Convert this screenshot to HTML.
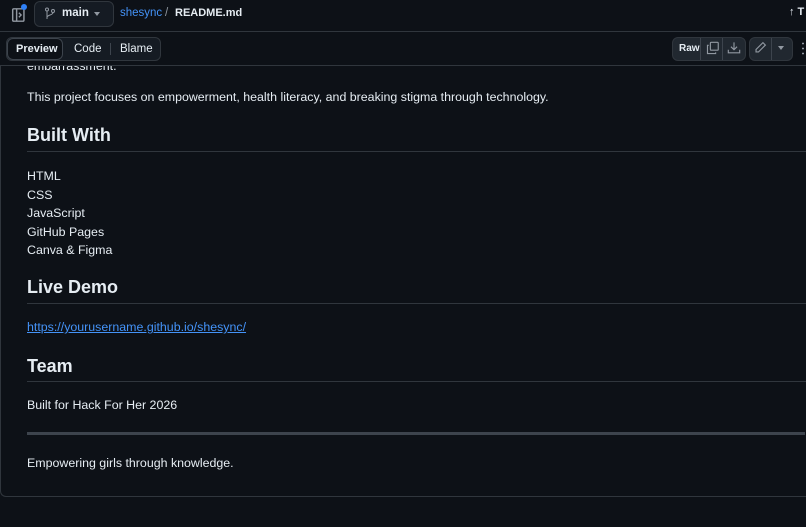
<!DOCTYPE html><html><head><style>
body{margin:0;width:806px;height:527px;background:#0d1117;font-family:"Liberation Sans",sans-serif;color:#e6edf3;overflow:hidden;position:relative}
.a{position:absolute}
.t{font-size:12.4px;white-space:nowrap}
h2{position:absolute;margin:0;font-size:18px;font-weight:bold;left:27px}
.hl{position:absolute;left:27px;right:0;height:1px;background:#30363d}
.btn{position:absolute;border:1px solid #30363d;border-radius:6px;background:#212830}
</style></head><body>
<div class="a" style="left:0;top:0;width:806px;height:31px;border-bottom:1px solid #30363d"></div>
<svg class="a" style="left:11px;top:6px" width="18" height="18" viewBox="0 0 16 16"><rect x="1.5" y="2.5" width="10" height="11" rx="1" fill="none" stroke="#9198a1" stroke-width="1.3"/><line x1="5" y1="3" x2="5" y2="13" stroke="#9198a1" stroke-width="1.3"/><path d="M7 6l2 2-2 2" fill="none" stroke="#9198a1" stroke-width="1.2"/></svg>
<div class="a" style="left:21px;top:4px;width:6px;height:6px;border-radius:50%;background:#2f81f7"></div>
<div class="btn" style="left:34px;top:1px;width:78px;height:24px;background:#151b23"></div>
<svg class="a" style="left:44px;top:7px" width="12" height="13" viewBox="0 0 12 13"><circle cx="3" cy="2.5" r="1.5" fill="none" stroke="#9198a1"/><circle cx="9" cy="4" r="1.5" fill="none" stroke="#9198a1"/><path d="M3 4v8M9 5.5c0 3-6 2-6 5" fill="none" stroke="#9198a1"/></svg>
<div class="a t" style="left:62px;top:7px;font-size:11.5px;font-weight:bold">main</div>
<div class="a" style="left:94px;top:12px;border:3.5px solid transparent;border-top:4px solid #9198a1"></div>
<div class="a t" style="left:120px;top:7px;font-size:11.5px;color:#4493f8">shesync</div>
<div class="a t" style="left:165px;top:7px;font-size:11.5px;color:#9198a1">/</div>
<div class="a t" style="left:175px;top:7px;font-size:11px;font-weight:bold">README.md</div>
<div class="a t" style="left:789px;top:6px;font-size:11px;font-weight:bold">↑ T</div>
<div class="a" style="left:0;top:65px;width:806px;height:1px;background:#30363d"></div>
<div class="btn" style="left:6px;top:37px;width:153px;height:22px;background:#151b23"></div>
<div class="a" style="left:7px;top:38px;width:56px;height:22px;border:1px solid #3d444d;border-radius:6px;background:#0d1117;box-sizing:border-box"></div>
<div class="a t" style="left:16px;top:43px;font-size:11px;font-weight:bold">Preview</div>
<div class="a t" style="left:74px;top:43px;font-size:11.5px">Code</div>
<div class="a" style="left:110px;top:43px;width:1px;height:12px;background:#3d444d"></div>
<div class="a t" style="left:120px;top:43px;font-size:11.5px">Blame</div>
<div class="btn" style="left:672px;top:37px;width:72px;height:22px"></div>
<div class="a t" style="left:679px;top:43px;font-size:10px;font-weight:bold">Raw</div>
<div class="a" style="left:700px;top:38px;width:1px;height:22px;background:#3d444d"></div>
<div class="a" style="left:722px;top:38px;width:1px;height:22px;background:#3d444d"></div>
<svg class="a" style="left:706px;top:41px" width="14" height="14" viewBox="0 0 16 16" fill="none" stroke="#9198a1" stroke-width="1.3"><rect x="5" y="1.5" width="9" height="9" rx="1"/><path d="M3 5H1.7v9.3H11V13"/></svg>
<svg class="a" style="left:727px;top:41px" width="14" height="14" viewBox="0 0 16 16" fill="none" stroke="#9198a1" stroke-width="1.3"><path d="M8 1.5v8M4.5 6.5 8 10l3.5-3.5M1.5 10v3.5h13V10"/></svg>
<div class="btn" style="left:749px;top:37px;width:42px;height:22px"></div>
<div class="a" style="left:771px;top:38px;width:1px;height:22px;background:#3d444d"></div>
<svg class="a" style="left:754px;top:41px" width="13" height="13" viewBox="0 0 16 16" fill="none" stroke="#9198a1" stroke-width="1.4"><path d="M11 2l3 3-8.5 8.5H2.5v-3z"/></svg>
<div class="a" style="left:778px;top:46px;border:3.5px solid transparent;border-top:4px solid #9198a1"></div>
<div class="a" style="left:802px;top:41px;width:2px;height:14px;background:radial-gradient(circle,#9198a1 1px,transparent 1px) 0 0/2px 5px"></div>
<div class="a" style="left:0;top:66px;width:806px;height:431px;overflow:hidden;border-bottom:1px solid #30363d;border-left:1px solid #30363d;border-bottom-left-radius:6px;box-sizing:border-box">
<div class="a t" style="left:26px;top:-7px">embarrassment.</div>
<div class="a t" style="left:26px;top:24px">This project focuses on empowerment, health literacy, and breaking stigma through technology.</div>
<h2 style="top:59px;left:26px">Built With</h2><div class="hl" style="top:85px;left:26px"></div>
<div class="a t" style="left:26px;top:101px;line-height:18.5px">HTML<br>CSS<br>JavaScript<br>GitHub Pages<br>Canva &amp; Figma</div>
<h2 style="top:211px;left:26px">Live Demo</h2><div class="hl" style="top:237px;left:26px"></div>
<div class="a t" style="left:26px;top:254px;color:#4493f8;text-decoration:underline">https://yourusername.github.io/shesync/</div>
<h2 style="top:290px;left:26px">Team</h2><div class="hl" style="top:315px;left:26px"></div>
<div class="a t" style="left:26px;top:332px">Built for Hack For Her 2026</div>
<div class="a" style="left:26px;top:366px;width:778px;height:3px;background:#3d444d"></div>
<div class="a t" style="left:26px;top:390px">Empowering girls through knowledge.</div>
</div>
</body></html>
